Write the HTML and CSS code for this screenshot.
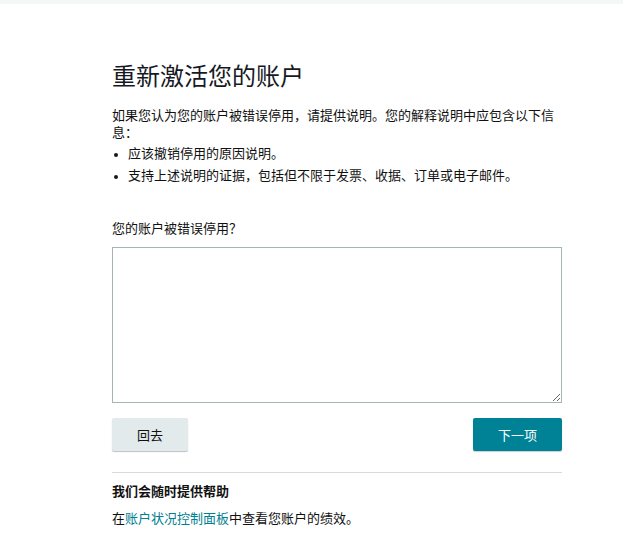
FILE: index.html
```html
<!DOCTYPE html>
<html lang="zh-CN">
<head>
    <meta charset="utf-8">
    <title>重新激活您的账户</title>
    <link rel="stylesheet" href="styles.css">
</head>
<body>
    <div class="top-bar"></div>

    <div class="page">
        <h1 class="title">重新激活您的账户</h1>

        <p class="intro">如果您认为您的账户被错误停用，请提供说明。您的解释说明中应包含以下信息：</p>
        <ul class="info-list">
            <li>应该撤销停用的原因说明。</li>
            <li>支持上述说明的证据，包括但不限于发票、收据、订单或电子邮件。</li>
        </ul>

        <label class="field-label" for="reason">您的账户被错误停用？</label>
        <textarea id="reason" class="reason-box"></textarea>

        <div class="actions">
            <button class="btn btn-back">回去</button>
            <button class="btn btn-next">下一项</button>
        </div>

        <div class="help">
            <p class="help-title">我们会随时提供帮助</p>
            <p class="help-text">在<a href="#" class="link">账户状况控制面板</a>中查看您账户的绩效。</p>
        </div>
    </div>
</body>
</html>
```

FILE: styles.css
```css
p{
    margin: 0;
}
body{
    margin: 0;
    background-color: #fff;
    font-family: "Liberation Sans", Arial, "Noto Sans CJK SC", sans-serif;
    font-size: 13px;
    color: #111;
}
.top-bar{
    height: 4px;
    background-color: #f3f7f8;
}
.page{
    width: 450px;
    margin-left: 112px;
    padding-top: 57px;
}
.title{
    margin: 0;
    font-size: 24px;
    font-weight: normal;
    line-height: 32px;
    color: #16191f;
}
.intro{
    margin-top: 14px;
    line-height: 17px;
}
.info-list{
    margin: 2px 0 0 0;
    padding-left: 0;
    list-style: none;
}
.info-list li{
    position: relative;
    padding-left: 16px;
    line-height: 18px;
    margin-top: 4px;
}
.info-list li::before{
    content: "";
    position: absolute;
    left: 2px;
    top: 8px;
    width: 4px;
    height: 4px;
    border-radius: 50%;
    background-color: #16191f;
}
.field-label{
    display: block;
    margin-top: 35px;
    line-height: 18px;
}
.reason-box{
    display: block;
    box-sizing: border-box;
    width: 450px;
    height: 156px;
    margin-top: 9px;
    border: 1px solid #a6b4b7;
    border-radius: 0;
    padding: 6px;
    font-family: inherit;
    font-size: 13px;
}
.actions{
    display: flex;
    justify-content: space-between;
    margin-top: 15px;
    padding-bottom: 21px;
    border-bottom: 1px solid #d5dbdb;
}
.btn{
    height: 33px;
    border: none;
    border-radius: 2px;
    font-family: inherit;
    font-size: 13px;
    cursor: pointer;
}
.btn-back{
    width: 76px;
    background-color: #e3eaec;
    color: #111;
    box-shadow: 0 1px 1px rgba(0, 0, 0, 0.25);
}
.btn-next{
    width: 89px;
    background-color: #008296;
    color: #fff;
    box-shadow: 0 1px 1px rgba(0, 0, 0, 0.2);
}
.help{
    padding-top: 10px;
}
.help-title{
    font-weight: bold;
    line-height: 18px;
}
.help-text{
    margin-top: 9px;
    line-height: 18px;
}
.link{
    color: #007f93;
    text-decoration: none;
}
```
